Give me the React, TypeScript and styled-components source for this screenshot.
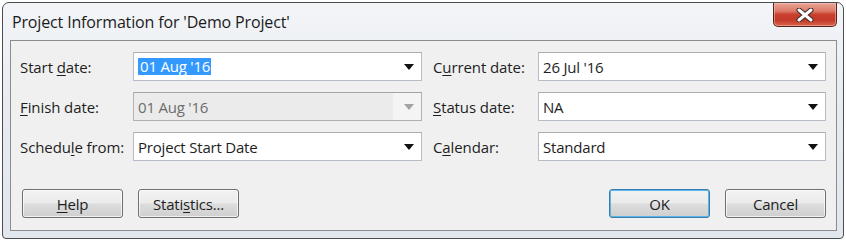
import React from "react";
import styled, { createGlobalStyle } from "styled-components";

const Global = createGlobalStyle`
  html, body { margin: 0; padding: 0; background: #ffffff; }
  body { font-family: "Open Sans", "Noto Sans", sans-serif; }
  #root { width: 846px; height: 241px; }
`;

const Outer = styled.div`
  width: 846px;
  height: 241px;
  box-sizing: border-box;
  padding: 2px;
  background: #ffffff;
`;

const Window = styled.div`
  height: 100%;
  box-sizing: border-box;
  border: 1px solid #4a4d52;
  border-radius: 7px 7px 4px 4px;
  background: linear-gradient(180deg, #f3f5f8 0%, #e8ecf1 40%, #e2e7ed 100%);
  display: flex;
  flex-direction: column;
`;

const TitleBar = styled.div`
  height: 37px;
  display: flex;
  align-items: flex-start;
  justify-content: space-between;
  padding: 0 6px 0 9px;
`;

const Title = styled.div`
  font-size: 16px;
  color: #1b1b1b;
  margin-top: 8px;
  letter-spacing: -0.15px;
`;

const CloseButton = styled.div`
  width: 64px;
  height: 24px;
  box-sizing: border-box;
  border: 1px solid #5b211a;
  border-top: none;
  border-radius: 0 0 5px 5px;
  background: linear-gradient(180deg, #e9a496 0%, #dc7a68 35%, #c9402e 50%, #c33b28 75%, #d8644c 100%);
  box-shadow: inset 0 0 0 1px rgba(255, 210, 200, 0.45);
  display: flex;
  align-items: center;
  justify-content: center;
`;

const Client = styled.div`
  flex: 1;
  margin: 0 6px 7px 7px;
  border: 1px solid #8a8c8f;
  background: #f0f0f0;
  display: flex;
  flex-direction: column;
  padding: 11px 9px 12px 9px;
`;

const Fields = styled.div`
  display: grid;
  grid-template-columns: 113px 289px 116px 288px;
  row-gap: 11px;
`;

const Label = styled.div<{ $right?: boolean }>`
  font-size: 15px;
  color: #1e1e1e;
  display: flex;
  align-items: center;
  height: 29px;
  padding-left: ${(p) => (p.$right ? "11px" : "0")};
  letter-spacing: -0.1px;
`;

const U = styled.span`
  text-decoration: underline;
  text-underline-offset: 2px;
`;

const Combo = styled.div<{ $disabled?: boolean }>`
  height: 29px;
  box-sizing: border-box;
  border: 1px solid ${(p) => (p.$disabled ? "#adb2b5" : "#b5bcc7")};
  border-top-color: ${(p) => (p.$disabled ? "#a0a5aa" : "#abadb3")};
  background: #ffffff;
  display: flex;
  align-items: center;
  font-size: 15px;
  letter-spacing: -0.2px;
  color: ${(p) => (p.$disabled ? "#6d6d6d" : "#1e1e1e")};
`;

const ComboText = styled.div<{ $disabled?: boolean }>`
  flex: 1;
  height: 100%;
  display: flex;
  align-items: center;
  padding-left: 4px;
  background: ${(p) => (p.$disabled ? "#ebebeb" : "transparent")};
`;

const Selected = styled.span`
  background: #3399ff;
  color: #ffffff;
  padding: 0 1px 0 2px;
  line-height: 17px;
`;

const Arrow = styled.div<{ $disabled?: boolean }>`
  width: 28px;
  height: 100%;
  display: flex;
  align-items: center;
  justify-content: center;
  background: ${(p) => (p.$disabled ? "#f4f4f4" : "transparent")};
  &::after {
    content: "";
    display: block;
    width: 0;
    height: 0;
    border-left: 5px solid transparent;
    border-right: 5px solid transparent;
    border-top: 6px solid ${(p) => (p.$disabled ? "#a3a3a3" : "#111111")};
    margin-left: 3px;
  }
`;

const ButtonRow = styled.div`
  margin-top: auto;
  display: flex;
  align-items: center;
  padding: 0 1px 0 2px;
`;

const Group = styled.div`
  display: flex;
  gap: 15px;
`;

const Spacer = styled.div`
  flex: 1;
`;

const Button = styled.div<{ $default?: boolean }>`
  width: 101px;
  height: 29px;
  box-sizing: border-box;
  border: 1px solid ${(p) => (p.$default ? "#3d7bad" : "#707070")};
  border-radius: 3px;
  background: linear-gradient(180deg, #f2f2f2 0%, #ebebeb 48%, #dddddd 52%, #cfcfcf 100%);
  box-shadow: inset 0 0 0 1px ${(p) => (p.$default ? "rgba(72, 176, 235, 0.9)" : "rgba(255,255,255,0.7)")};
  display: flex;
  align-items: center;
  justify-content: center;
  font-size: 15px;
  letter-spacing: -0.2px;
  color: #1e1e1e;
`;

function ComboBox({ children, disabled }: { children: React.ReactNode; disabled?: boolean }) {
  return (
    <Combo $disabled={disabled}>
      <ComboText $disabled={disabled}>{children}</ComboText>
      <Arrow $disabled={disabled} />
    </Combo>
  );
}

export default function App() {
  return (
    <>
      <Global />
      <Outer>
        <Window>
          <TitleBar>
            <Title>Project Information for 'Demo Project'</Title>
            <CloseButton>
              <svg width="20" height="14" viewBox="0 0 20 14">
                <path d="M4 2 L16 12 M16 2 L4 12" stroke="#3a2a2a" strokeWidth="5" strokeLinecap="round" />
                <path d="M4 2 L16 12 M16 2 L4 12" stroke="#ffffff" strokeWidth="3" strokeLinecap="round" />
              </svg>
            </CloseButton>
          </TitleBar>
          <Client>
            <Fields>
              <Label>
                Start&nbsp;<U>d</U>ate:
              </Label>
              <ComboBox>
                <Selected>01 Aug '16</Selected>
              </ComboBox>
              <Label $right>
                C<U>u</U>rrent date:
              </Label>
              <ComboBox>26 Jul '16</ComboBox>

              <Label>
                <U>F</U>inish date:
              </Label>
              <ComboBox disabled>01 Aug '16</ComboBox>
              <Label $right>
                <U>S</U>tatus date:
              </Label>
              <ComboBox>NA</ComboBox>

              <Label>
                Schedu<U>l</U>e from:
              </Label>
              <ComboBox>Project Start Date</ComboBox>
              <Label $right>
                C<U>a</U>lendar:
              </Label>
              <ComboBox>Standard</ComboBox>
            </Fields>
            <ButtonRow>
              <Group>
                <Button>
                  <span>
                    <U>H</U>elp
                  </span>
                </Button>
                <Button>
                  <span>
                    Stati<U>s</U>tics...
                  </span>
                </Button>
              </Group>
              <Spacer />
              <Group>
                <Button $default>OK</Button>
                <Button>Cancel</Button>
              </Group>
            </ButtonRow>
          </Client>
        </Window>
      </Outer>
    </>
  );
}
